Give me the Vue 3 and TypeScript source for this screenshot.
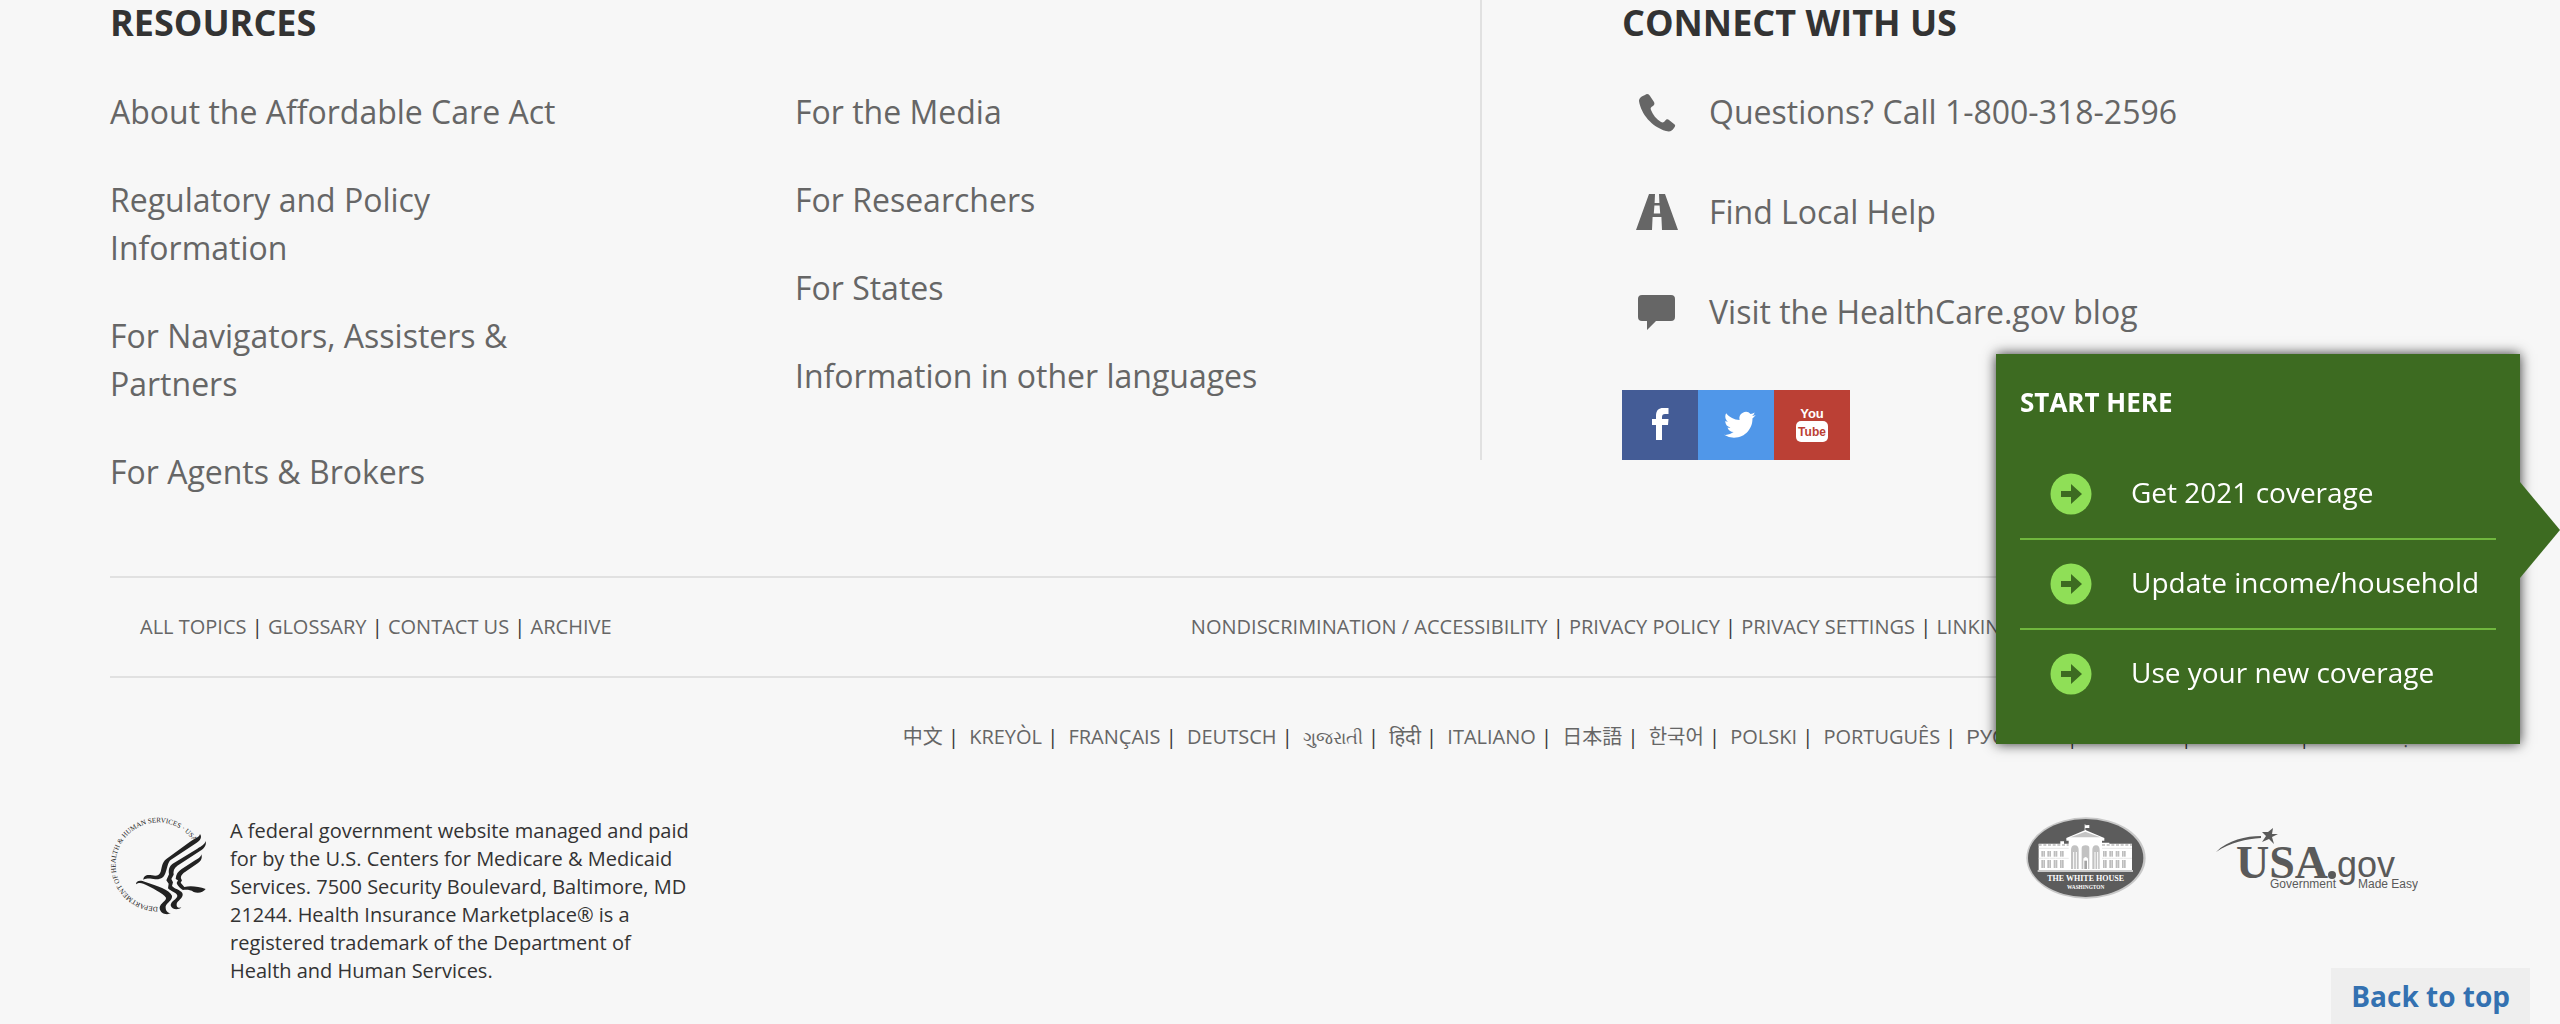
<script setup lang="ts">
interface Language {
  label: string
  code: string
}

const resourceColumns: string[][] = [
  [
    'About the Affordable Care Act',
    'Regulatory and Policy Information',
    'For Navigators, Assisters & Partners',
    'For Agents & Brokers',
  ],
  ['For the Media', 'For Researchers', 'For States', 'Information in other languages'],
]

const siteLinks: string[] = ['ALL TOPICS', 'GLOSSARY', 'CONTACT US', 'ARCHIVE']

const policyLinks: string[] = [
  'NONDISCRIMINATION / ACCESSIBILITY',
  'PRIVACY POLICY',
  'PRIVACY SETTINGS',
  'LINKING POLICY',
  'USING THIS SITE',
  'PLAIN WRITING',
]

const languages: Language[] = [
  { label: '中文', code: 'zh' },
  { label: 'KREYÒL', code: 'ht' },
  { label: 'FRANÇAIS', code: 'fr' },
  { label: 'DEUTSCH', code: 'de' },
  { label: 'ગુજરાતી', code: 'gu' },
  { label: 'हिंदी', code: 'hi' },
  { label: 'ITALIANO', code: 'it' },
  { label: '日本語', code: 'ja' },
  { label: '한국어', code: 'ko' },
  { label: 'POLSKI', code: 'pl' },
  { label: 'PORTUGUÊS', code: 'pt' },
  { label: 'РУССКИЙ', code: 'ru' },
  { label: 'ESPAÑOL', code: 'es' },
  { label: 'TAGALOG', code: 'tl' },
  { label: 'TIẾNG VIỆT', code: 'vi' },
]

const startLinks: string[] = ['Get 2021 coverage', 'Update income/household', 'Use your new coverage']

const windowColumns: number[] = [99, 117, 136, 155, 284, 303, 322, 341]
</script>

<template>
  <footer class="footer">
    <div class="top">
      <section class="resources">
        <h2>RESOURCES</h2>
        <div class="columns">
          <ul v-for="(column, i) in resourceColumns" :key="i">
            <li v-for="item in column" :key="item"><a href="#">{{ item }}</a></li>
          </ul>
        </div>
      </section>

      <section class="connect">
        <h2>CONNECT WITH US</h2>
        <ul>
          <li>
            <svg viewBox="0 0 44 44" aria-hidden="true">
              <path d="M10 5 C12 3 14 4 15 6 L19 12 C20 14 19 15 18 16 C16 17 15 18 16 20 C18 25 21 29 26 32 C28 33 29 32 30 31 C31 29 33 29 34 30 L39 34 C41 35 40 37 39 38 C37 41 35 42 31 41 C17 37 6 24 4 11 C4 8 7 6 10 5Z" />
            </svg>
            <a href="#">Questions? Call 1-800-318-2596</a>
          </li>
          <li>
            <svg viewBox="0 0 44 44" aria-hidden="true">
              <path d="M14 4 H20 L19.600 13 H24.400 L24 4 H30 L43 40 H27 L26.400 27 H17.600 L17 40 H1Z M19.400 15.500 L18.800 23.500 H25.200 L24.600 15.500Z" fill-rule="evenodd" />
            </svg>
            <a href="#">Find Local Help</a>
          </li>
          <li>
            <svg viewBox="0 0 44 44" aria-hidden="true">
              <path d="M7 5 H36 Q40 5 40 9 V27 Q40 31 36 31 H21 L12 40 V31 H7 Q3 31 3 27 V9 Q3 5 7 5Z" />
            </svg>
            <a href="#">Visit the HealthCare.gov blog</a>
          </li>
        </ul>
        <div class="social">
          <a class="facebook" href="#" aria-label="Facebook">
            <svg viewBox="0 0 76 70" aria-hidden="true">
              <path d="M34 50 V35 H30 V29 H34 V26 C34 20 37 18 41 18 H46.500 V24 H43 C41 24 40 25 40 27 V29 H46.500 L46 35 H40 V50Z" />
            </svg>
          </a>
          <a class="twitter" href="#" aria-label="Twitter">
            <svg viewBox="0 0 76 70" aria-hidden="true">
              <path transform="translate(26 19) scale(1.32)" d="M23.950 4.570a10 10 0 0 1-2.820.770 4.960 4.960 0 0 0 2.160-2.720c-.950.560-2 .950-3.130 1.190a4.920 4.920 0 0 0-8.380 4.480C7.690 8.100 4.070 6.130 1.640 3.160a4.820 4.820 0 0 0-.670 2.480c0 1.710.870 3.210 2.190 4.100a4.900 4.900 0 0 1-2.230-.620v.060a4.920 4.920 0 0 0 3.950 4.830 5 5 0 0 1-2.210.080 4.940 4.940 0 0 0 4.600 3.420A9.870 9.870 0 0 1 0 19.540a14 14 0 0 0 7.550 2.210c9.050 0 14-7.500 14-13.980 0-.210 0-.420-.020-.630A9.940 9.940 0 0 0 24 4.590z" />
            </svg>
          </a>
          <a class="youtube" href="#" aria-label="YouTube">
            <svg viewBox="0 0 76 70" aria-hidden="true">
              <text x="38" y="28" font-size="13">You</text>
              <rect x="22" y="31" width="32" height="21" rx="5" />
              <text x="38" y="46" font-size="12" class="tube">Tube</text>
            </svg>
          </a>
        </div>
      </section>
    </div>

    <div class="links-bar">
      <nav aria-label="Site">
        <template v-for="(item, i) in siteLinks" :key="item"><span v-if="i"> | </span><a href="#">{{ item }}</a></template>
      </nav>
      <nav aria-label="Policies">
        <template v-for="(item, i) in policyLinks" :key="item"><span v-if="i"> | </span><a href="#">{{ item }}</a></template>
      </nav>
    </div>

    <nav class="languages" aria-label="Languages">
      <template v-for="(item, i) in languages" :key="item.code"><span v-if="i" class="bar"> | </span><a href="#" :lang="item.code">{{ item.label }}</a></template>
    </nav>

    <div class="agencies">
      <svg class="hhs" viewBox="60 50 291 294" role="img" aria-label="Department of Health and Human Services">
        <path id="seal-ring" d="M204 320 A127 127 0 1 1 318 137" fill="none" />
        <text font-size="21"><textPath href="#seal-ring">DEPARTMENT OF HEALTH &amp; HUMAN SERVICES · USA</textPath></text>
        <path d="M330 101 C337 110 331 121 319 128 L243 178 C234 184 233 198 228 213 C223 232 213 238 196 237 C181 235 173 233 160 238 C160 226 171 221 186 225 C201 228 208 225 212 214 C216 200 216 186 229 176 L300 124 C316 114 327 111 330 101Z" />
        <path d="M347 122 C350 135 343 144 330 152 L262 196 C252 203 249 212 251 223 L244 236 L249 246 L246 257 C254 266 270 268 277 278 C282 290 268 298 261 307 C257 318 264 325 274 321 C264 331 245 328 242 315 C242 302 262 296 262 286 C260 276 243 274 234 264 L236 250 L229 240 L237 222 C235 206 238 198 248 190 L322 145 C337 136 344 132 347 122Z" />
        <path d="M334 162 C338 174 333 183 321 190 L285 215 C272 224 270 232 276 240 L272 247 L283 260 C300 256 325 258 347 266 C340 276 325 280 311 275 C301 268 290 268 279 269 C272 266 262 256 260 248 L264 240 L257 236 C258 222 264 213 275 206 L312 182 C326 174 332 172 334 162Z" />
        <path d="M138 252 C138 241 150 238 166 245 C202 257 238 268 246 286 C248 300 231 306 227 318 C226 330 232 338 243 339 C226 346 208 337 209 321 C211 308 229 302 228 292 C220 279 186 262 160 250 C150 247 144 248 138 252Z" />
      </svg>
      <p>
        A federal government website managed and paid for by the U.S. Centers for Medicare &amp; Medicaid Services.
        7500 Security Boulevard, Baltimore, MD 21244. Health Insurance Marketplace® is a registered trademark of the
        Department of Health and Human Services.
      </p>
      <a class="whitehouse" href="#" aria-label="The White House">
        <svg viewBox="53 47 360 246" aria-hidden="true">
          <ellipse cx="233" cy="170" rx="179" ry="122" fill="#c8c8c8" />
          <ellipse cx="232" cy="170" rx="173" ry="117" fill="#5c5c5c" />
          <path d="M229 88 V69 H231 V72 L243 71 V80 L231 80 V88Z M174 110 L231 86 L288 110 V118 H281 V124 H303 V127 H371 V208 H91 V127 H156 V120 H167 V127 H181 V118 H174Z" fill="#fff" />
          <path d="M186 108 L231 91 L276 108Z" fill="#c4c4c4" />
          <path d="M91 131 H181 M281 131 H371" stroke="#bbb" stroke-width="4" stroke-dasharray="9 5" />
          <path d="M91 141 H181 M281 141 H371 M91 171 H181 M281 171 H371" stroke="#ddd" stroke-width="2" />
          <g fill="#bdbdbd">
            <template v-for="x in windowColumns" :key="x">
              <rect :x="x" y="149" width="11" height="17" />
              <rect :x="x" y="176" width="11" height="24" />
              <rect :x="x + 5" y="149" width="1" height="51" fill="#fff" />
            </template>
          </g>
          <path d="M188 203 V146 Q188 132 199 132 Q211 132 211 146 V203Z M220 203 V140 Q220 132 232 132 Q243 132 243 140 V203Z M252 203 V146 Q252 132 263 132 Q274 132 274 146 V203Z" fill="#c2c2c2" />
          <path d="M196 152 V203 M204 152 V203 M260 152 V203 M268 152 V203" stroke="#fff" stroke-width="3" />
          <path d="M225 172 Q232 162 239 172 V203 H225Z" fill="#fff" />
          <path d="M228 178 H236 V203 H228Z" fill="#a5a5a5" />
          <rect x="88" y="206" width="286" height="6" fill="#c9c9c9" />
          <text x="232" y="239" font-size="24">THE WHITE HOUSE</text>
          <text x="232" y="262" font-size="16">WASHINGTON</text>
        </svg>
      </a>
      <a class="usagov" href="#" aria-label="USA.gov">
        <svg viewBox="0 0 202 64" aria-hidden="true">
          <path d="M0 24 C12 12 30 8 45 8 L45 10 C30 11 15 14 0 24Z" />
          <path d="M57 0 L56 6 L62 6 L56 9 L58 16 L53 11 L46 14 L50 8 L46 4 L52 4Z" />
          <text class="serif" x="20" y="50" font-size="46">USA</text>
          <circle cx="116" cy="47" r="4" />
          <text x="121" y="49" font-size="36">gov</text>
          <text x="54" y="60" font-size="12">Government</text>
          <text x="142" y="60" font-size="12">Made Easy</text>
        </svg>
      </a>
    </div>
  </footer>

  <aside class="start">
    <h2>START HERE</h2>
    <ul>
      <li v-for="item in startLinks" :key="item">
        <a href="#">
          <svg viewBox="0 0 42 42" aria-hidden="true">
            <circle cx="21" cy="21" r="20.500" fill="#8fdf57" />
            <path d="M11 18 H21 V11 L32 21 L21 31 V24 H11Z" fill="#3d6b21" />
          </svg>
          <span>{{ item }}</span>
        </a>
      </li>
    </ul>
  </aside>

  <a class="back-to-top" href="#">Back to top</a>
</template>

<style>
body {
  background: #f7f7f7;
}
</style>

<style scoped>
.footer,
.start,
.back-to-top {
  font-family: "Open Sans", "Noto Sans CJK SC", "Noto Sans", sans-serif;
}

.footer {
  padding: 0 110px 40px;
  color: #333;
}

a {
  color: #666;
  text-decoration: none;
}

ul {
  list-style: none;
  margin: 0;
  padding: 0;
}

h2 {
  margin: 0;
  font-size: 36px;
  line-height: 46px;
  font-weight: 700;
}

.top {
  display: grid;
  grid-template-columns: 1370fr 970fr;
  align-items: start;
}

.columns {
  display: grid;
  grid-template-columns: 1fr 1fr;
  margin-top: 42px;
  font-size: 32px;
  line-height: 48px;
}

.columns ul {
  display: flex;
  flex-direction: column;
  gap: 40px;
  padding-right: 30%;
}

.connect {
  border-left: 2px solid #e1e1e1;
  padding-left: 140px;
}

.connect ul {
  display: flex;
  flex-direction: column;
  gap: 52px;
  margin: 42px 0 54px;
  font-size: 32px;
  line-height: 48px;
}

.connect li {
  display: flex;
  align-items: center;
  gap: 30px;
  padding-left: 13px;
}

.connect li svg {
  width: 44px;
  height: 44px;
  fill: #666;
}

.social {
  display: flex;
}

.social a,
.social svg {
  display: block;
  width: 76px;
  height: 70px;
  fill: #fff;
}

.social text {
  font-family: "Liberation Sans", sans-serif;
  font-weight: 700;
  text-anchor: middle;
}

.facebook {
  background: #445c96;
}

.twitter {
  background: #5097e9;
}

.youtube {
  background: #bb4035;
}

.social .tube {
  fill: #bb4035;
}

.links-bar {
  display: flex;
  justify-content: space-between;
  margin-top: 80px;
  padding: 34px 24px 34px 30px;
  border-top: 2px solid #e1e1e1;
  border-bottom: 2px solid #e1e1e1;
  font-size: 20px;
  line-height: 30px;
}

.links-bar span,
.languages span {
  white-space: pre;
}

.languages {
  padding: 44px 28px 0;
  text-align: right;
  font-size: 20px;
  line-height: 30px;
}

.languages a:lang(gu) {
  font-size: 18px;
}

.languages a:lang(ru) {
  font-family: "Liberation Sans", sans-serif;
}

.bar {
  margin-right: 5px;
}

.agencies {
  display: flex;
  align-items: flex-start;
  margin-top: 65px;
  padding-right: 32px;
}

.agencies svg {
  display: block;
}

.hhs {
  width: 97px;
  height: 98px;
  fill: #222;
  font-family: "Liberation Serif", serif;
}

.agencies p {
  width: 462px;
  margin: 0 auto 0 23px;
  font-size: 20px;
  line-height: 28px;
}

.whitehouse svg {
  width: 120px;
  height: 82px;
  fill: #fff;
  font-family: "Liberation Serif", serif;
  font-weight: 700;
  text-anchor: middle;
}

.usagov {
  margin: 11px 0 0 70px;
}

.usagov svg {
  width: 202px;
  height: 64px;
  fill: #5a5a5a;
  font-family: "Liberation Sans", sans-serif;
}

.usagov .serif {
  font-family: "Liberation Serif", serif;
  font-weight: 700;
}

.start {
  position: fixed;
  top: 354px;
  right: 40px;
  box-sizing: border-box;
  width: 524px;
  padding: 29px 24px 26px;
  background: #3d6b21;
  box-shadow: 0 0 12px rgba(0, 0, 0, 0.8);
  color: #fff;
}

.start::after {
  content: "";
  position: absolute;
  top: 128px;
  left: 100%;
  width: 40px;
  height: 96px;
  background: #3d6b21;
  clip-path: polygon(0 0, 100% 50%, 0 100%);
}

.start h2 {
  font-size: 26px;
  line-height: 38px;
  margin-bottom: 29px;
}

.start li + li {
  border-top: 2px solid #70b73e;
}

.start a {
  display: flex;
  align-items: center;
  gap: 39px;
  height: 88px;
  padding-left: 30px;
  color: #fff;
  font-size: 28px;
  line-height: 42px;
}

.start span {
  padding-bottom: 4px;
}

.start svg {
  width: 42px;
  height: 42px;
}

.back-to-top {
  position: fixed;
  right: 30px;
  bottom: 0;
  padding: 8px 20px;
  background: #eee;
  color: #3371b1;
  font-size: 28px;
  line-height: 40px;
  font-weight: 700;
}
</style>
